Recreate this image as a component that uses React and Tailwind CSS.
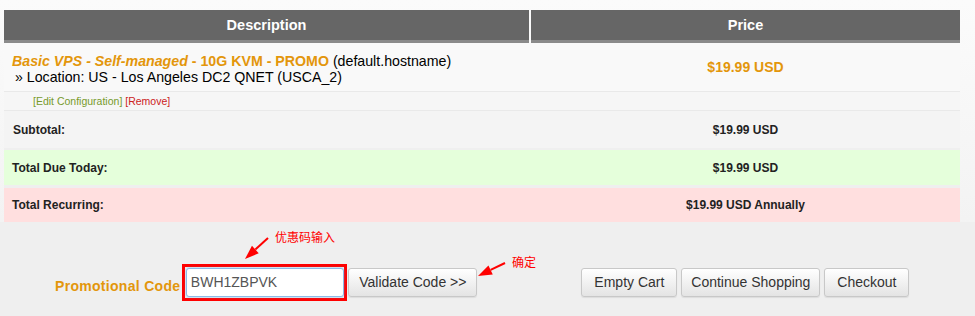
import React from 'react';

const font = { fontFamily: '"Liberation Sans", Arial, "Noto Sans CJK SC", sans-serif' };

function Row({ left, right, className = '', rightClass = '' }) {
  return (
    <div className={`flex ${className}`}>
      <div className="flex w-[525px] items-center px-2">{left}</div>
      <div className={`ml-[2px] flex w-[429px] items-center justify-center ${rightClass}`}>{right}</div>
    </div>
  );
}

function Button({ children, className = '' }) {
  return (
    <button
      className={`h-[29px] shrink-0 whitespace-nowrap rounded-[3px] border border-[#c8c8c8] bg-gradient-to-b from-white to-[#e4e4e4] px-0 text-[14px] text-[#333] shadow-[0_1px_1px_rgba(0,0,0,0.08)] ${className}`}
    >
      {children}
    </button>
  );
}

function Arrow({ x1, y1, x2, y2 }) {
  const a = Math.atan2(y2 - y1, x2 - x1);
  const l = 14;
  const w = 5;
  const bx = x2 - l * Math.cos(a);
  const by = y2 - l * Math.sin(a);
  const px = -Math.sin(a) * w;
  const py = Math.cos(a) * w;
  return (
    <g>
      <line x1={x1} y1={y1} x2={bx} y2={by} stroke="#ff0000" strokeWidth="2" />
      <polygon points={`${x2},${y2} ${bx + px},${by + py} ${bx - px},${by - py}`} fill="#ff0000" />
    </g>
  );
}

export default function App() {
  return (
    <div className="relative h-[316px] w-[975px] overflow-hidden bg-[#efefef]" style={font}>
      <div className="bg-gradient-to-b from-[#fbfbfb] to-[#f3f3f3] pt-[10px]">
        <div className="ml-[4px] w-[956px]">
          {/* header */}
          <div className="flex h-[33px]">
            <div className="flex w-[525px] items-center justify-center border-b-[3px] border-[#8a8a8a] bg-[#666] pt-[2px] text-[14.5px] font-bold text-white">
              Description
            </div>
            <div className="ml-[2px] flex w-[429px] items-center justify-center border-b-[3px] border-[#8a8a8a] bg-[#666] pt-[2px] text-[14.5px] font-bold text-white">
              Price
            </div>
          </div>

          <div className="flex flex-col bg-[#e9e9e9]">
            <Row
              className="h-[48px] bg-[#f9f9f9]"
              left={
                <div className="pt-[3px] text-[14.2px] leading-[16px] text-black">
                  <div>
                    <span className="font-bold italic text-[#e3960b]">Basic VPS - Self-managed</span>
                    <span className="font-bold text-[#e3960b]"> - 10G KVM - PROMO</span> (default.hostname)
                  </div>
                  <div className="pl-[3px]">» Location: US - Los Angeles DC2 QNET (USCA_2)</div>
                </div>
              }
              right={<span className="text-[14px] font-bold text-[#e3960b]">$19.99 USD</span>}
            />
            <Row
              className="mt-px h-[18px] bg-[#f6f6f6]"
              left={
                <div className="pl-[21px] pt-px text-[10.5px]">
                  <span className="text-[#779a2c]">[Edit Configuration]</span>{' '}
                  <span className="text-[#cc2222]">[Remove]</span>
                </div>
              }
            />
            <Row
              className="mt-px h-[37px] bg-[#f4f4f4]"
              left={<span className="pl-[1px] text-[12px] font-bold text-[#222]">Subtotal:</span>}
              right={<span className="text-[12px] font-bold text-[#222]">$19.99 USD</span>}
            />
          </div>
          <div className="flex flex-col bg-[#efefef]">
            <Row
              className="mt-[2px] h-[35px] bg-[#e5ffdb]"
              left={<span className="text-[12px] font-bold text-[#222]">Total Due Today:</span>}
              right={<span className="text-[12px] font-bold text-[#222]">$19.99 USD</span>}
            />
            <Row
              className="mt-[3px] h-[34px] bg-[#ffdfdf]"
              left={<span className="text-[12px] font-bold text-[#222]">Total Recurring:</span>}
              right={<span className="text-[12px] font-bold text-[#222]">$19.99 USD Annually</span>}
            />
          </div>
        </div>
      </div>

      {/* promo + buttons */}
      <div className="mt-[42px] flex items-center">
        <span className="ml-[55px] mt-[8px] text-[14px] font-bold tracking-[0.3px] text-[#e3960b]">Promotional Code</span>
        <div className="ml-[2px] flex h-[37px] w-[165px] shrink-0 items-center justify-center border-[3px] border-[#ff0000]">
          <div className="flex h-[29px] w-[158px] items-center rounded-[3px] border border-[#8cbbe8] bg-white px-[4px] text-[14px] text-[#555] shadow-[0_0_3px_rgba(82,168,236,0.5)]">
            BWH1ZBPVK
          </div>
        </div>
        <Button className="ml-[1px] w-[129px]">Validate Code &gt;&gt;</Button>
        <Button className="ml-[104px] w-[96px]">Empty Cart</Button>
        <Button className="ml-[4px] w-[139px]">Continue Shopping</Button>
        <Button className="ml-[4px] w-[85px]">Checkout</Button>
      </div>

      {/* annotations */}
      <svg className="pointer-events-none absolute left-0 top-0" width="975" height="316">
        <Arrow x1={268} y1={238} x2={245} y2={259} />
        <Arrow x1={505} y1={263} x2={478} y2={276} />
      </svg>
      <span className="absolute left-[275px] top-[229px] text-[12px] text-[#ff0000]">优惠码输入</span>
      <span className="absolute left-[512px] top-[254px] text-[12px] text-[#ff0000]">确定</span>
    </div>
  );
}
